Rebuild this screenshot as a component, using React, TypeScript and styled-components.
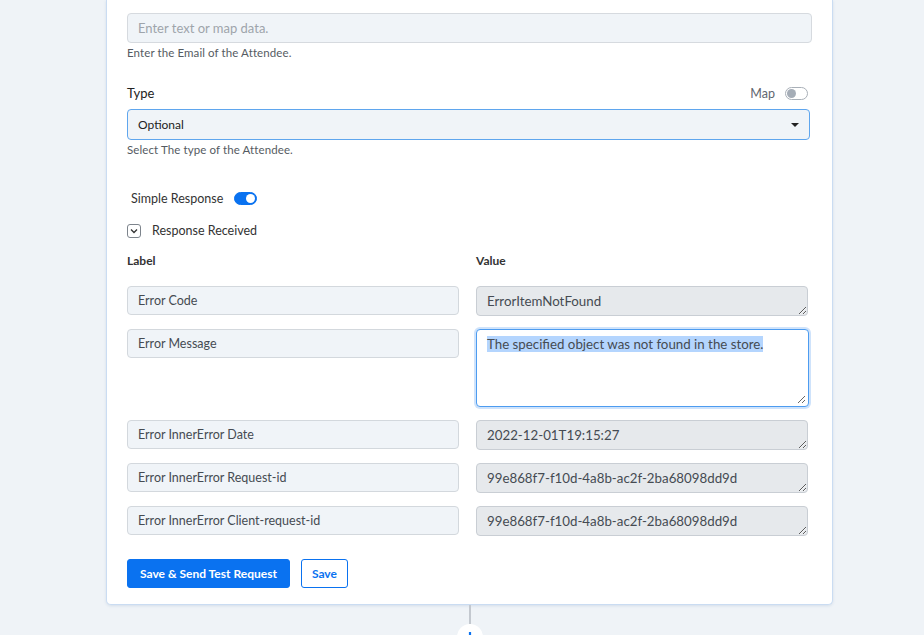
import styled, { createGlobalStyle } from "styled-components";

const GlobalStyle = createGlobalStyle`
  html, body {
    margin: 0;
    padding: 0;
    background: #eff3f7;
    font-family: Lato, "Noto Sans", sans-serif;
    color: #333;
  }
  * { box-sizing: border-box; }
`;

const Page = styled.div`
  padding-left: 106px;
  height: 635px;
  overflow: hidden;
`;
const Card = styled.div`
  width: 727px;
  background: #fff;
  border: 1px solid #cadcf2;
  border-top: none;
  border-radius: 0 0 5px 5px;
  box-shadow: 0 1px 3px rgba(90, 130, 180, 0.18);
  padding: 13px 20px 16px 20px;
`;
const TextInput = styled.div`
  height: 30px;
  width: 685px;
  background: #f0f4f8;
  border: 1px solid #d6dadf;
  border-radius: 4px;
  padding: 0 10px;
  display: flex;
  align-items: center;
  font-size: 13px;
  color: #9ea4ab;
`;
const Help = styled.div`
  font-size: 11.5px;
  color: #555b62;
  margin-top: 3px;
  letter-spacing: 0.1px;
`;
const LabelRow = styled.div`
  display: flex;
  justify-content: space-between;
  align-items: center;
  margin-top: 26px;
  margin-bottom: 8px;
  width: 681px;
`;
const FieldLabel = styled.span`
  font-size: 13px;
  color: #222;
`;
const MapToggle = styled.div`
  display: flex;
  align-items: center;
  gap: 10px;
  font-size: 12.5px;
  color: #5f6670;
`;
const Switch = styled.span<{ $on?: boolean }>`
  width: 23px;
  height: 13px;
  border-radius: 7px;
  border: 1px solid ${(p) => (p.$on ? "#0a72f0" : "#a9b0b8")};
  background: ${(p) => (p.$on ? "#0a72f0" : "#fff")};
  display: flex;
  align-items: center;
  justify-content: ${(p) => (p.$on ? "flex-end" : "flex-start")};
  padding: 0 1px;
  &::after {
    content: "";
    width: 9px;
    height: 9px;
    border-radius: 50%;
    background: ${(p) => (p.$on ? "#fff" : "#a5adb7")};
  }
`;
const Select = styled.div`
  height: 31px;
  width: 683px;
  background: #f0f4f8;
  border: 1px solid #5fa6ee;
  border-radius: 4px;
  padding: 0 10px;
  display: flex;
  align-items: center;
  justify-content: space-between;
  font-size: 12px;
  color: #222;
`;
const Caret = styled.span`
  width: 0;
  height: 0;
  border-left: 4px solid transparent;
  border-right: 4px solid transparent;
  border-top: 4px solid #222;
`;
const InlineRow = styled.div<{ $gap: number; $top: number; $indent?: number }>`
  display: flex;
  align-items: center;
  gap: ${(p) => p.$gap}px;
  margin-top: ${(p) => p.$top}px;
  padding-left: ${(p) => p.$indent ?? 0}px;
  font-size: 12.5px;
  color: #333;
`;
const Chevron = styled.span`
  width: 14px;
  height: 14px;
  border: 1px solid #7d848c;
  border-radius: 3px;
  display: flex;
  align-items: center;
  justify-content: center;
`;
const Grid = styled.div`
  display: grid;
  grid-template-columns: 332px 332px;
  column-gap: 17px;
  row-gap: 13px;
  margin-top: 15px;
  align-items: start;
`;
const ColHead = styled.div`
  font-size: 12px;
  font-weight: 700;
  color: #333;
  margin-bottom: 5px;
`;
const LabelBox = styled.div`
  height: 29px;
  background: #f0f4f8;
  border: 1px solid #d3d8dd;
  border-radius: 4px;
  padding: 0 10px;
  display: flex;
  align-items: center;
  font-size: 12.5px;
  color: #454b52;
`;
const ValueBox = styled.textarea`
  display: block;
  width: 332px;
  height: 30px;
  background: #e6e9ec;
  border: 1px solid #c9ced4;
  border-radius: 4px;
  padding: 6px 10px;
  font-family: Lato, "Noto Sans", sans-serif;
  font-size: 13.3px;
  line-height: 16px;
  color: #454b52;
  overflow: hidden;
  resize: vertical;
  outline: none;
`;
const FocusedBox = styled.div`
  position: relative;
  width: 333px;
  height: 78px;
  background: #fff;
  border: 1px solid #4d9cf0;
  border-radius: 4px;
  box-shadow: 0 0 0 2px #cfe3fb;
  padding: 5px 10px;
  font-size: 13.3px;
  line-height: 18px;
  color: #454b52;
`;
const Highlight = styled.span`
  background: #b4d5fe;
`;
const Grip = styled.svg`
  position: absolute;
  right: 2px;
  bottom: 2px;
`;
const Buttons = styled.div`
  display: flex;
  gap: 11px;
  margin-top: 23px;
`;
const Button = styled.button<{ $primary?: boolean }>`
  height: 29px;
  padding: 0 ${(p) => (p.$primary ? 12 : 10)}px;
  border-radius: 3px;
  border: 1px solid #0a72f0;
  background: ${(p) => (p.$primary ? "#0a72f0" : "#fff")};
  color: ${(p) => (p.$primary ? "#fff" : "#0a72f0")};
  font-family: Lato, "Noto Sans", sans-serif;
  font-size: 12px;
  font-weight: 700;
`;
const Connector = styled.div`
  width: 727px;
  display: flex;
  flex-direction: column;
  align-items: center;
`;
const Line = styled.div`
  width: 2px;
  height: 19px;
  background: #c3c8cf;
`;
const PlusCircle = styled.div`
  width: 26px;
  height: 26px;
  border-radius: 50%;
  background: #fff;
  display: flex;
  align-items: center;
  justify-content: center;
`;

const rows = [
  { label: "Error Code", value: "ErrorItemNotFound" },
  { label: "Error Message", value: "The specified object was not found in the store.", focused: true },
  { label: "Error InnerError Date", value: "2022-12-01T19:15:27" },
  { label: "Error InnerError Request-id", value: "99e868f7-f10d-4a8b-ac2f-2ba68098dd9d" },
  { label: "Error InnerError Client-request-id", value: "99e868f7-f10d-4a8b-ac2f-2ba68098dd9d" },
];

export default function App() {
  return (
    <>
      <GlobalStyle />
      <Page>
        <Card>
          <TextInput>Enter text or map data.</TextInput>
          <Help>Enter the Email of the Attendee.</Help>

          <LabelRow>
            <FieldLabel>Type</FieldLabel>
            <MapToggle>
              Map
              <Switch />
            </MapToggle>
          </LabelRow>
          <Select>
            Optional
            <Caret />
          </Select>
          <Help>Select The type of the Attendee.</Help>

          <InlineRow $gap={11} $top={35} $indent={4}>
            Simple Response
            <Switch $on />
          </InlineRow>
          <InlineRow $gap={11} $top={17}>
            <Chevron>
              <svg width="8" height="6" viewBox="0 0 8 6">
                <path d="M1 1.5 L4 4.5 L7 1.5" fill="none" stroke="#333" strokeWidth="1.3" />
              </svg>
            </Chevron>
            Response Received
          </InlineRow>

          <Grid>
            <ColHead>Label</ColHead>
            <ColHead>Value</ColHead>
            {rows.map((r) => [
              <LabelBox key={r.label + "-l"}>{r.label}</LabelBox>,
              r.focused ? (
                <FocusedBox key={r.label + "-v"}>
                  <Highlight>{r.value}</Highlight>
                  <Grip width="9" height="9" viewBox="0 0 9 9">
                    <path d="M8 1 L1 8 M8 5 L5 8" stroke="#666" strokeWidth="1" />
                  </Grip>
                </FocusedBox>
              ) : (
                <ValueBox key={r.label + "-v"} readOnly value={r.value} />
              ),
            ])}
          </Grid>

          <Buttons>
            <Button $primary>Save &amp; Send Test Request</Button>
            <Button>Save</Button>
          </Buttons>
        </Card>
        <Connector>
          <Line />
          <PlusCircle>
            <svg width="12" height="12" viewBox="0 0 12 12">
              <path d="M6 1 V11 M1 6 H11" stroke="#0a72f0" strokeWidth="2.2" />
            </svg>
          </PlusCircle>
        </Connector>
      </Page>
    </>
  );
}
